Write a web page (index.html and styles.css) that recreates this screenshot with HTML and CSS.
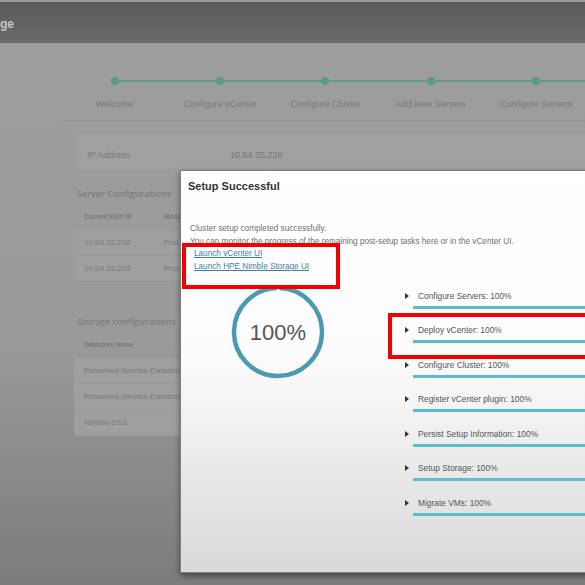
FILE: index.html
```html
<!DOCTYPE html>
<html lang="en">
<head>
    <meta charset="UTF-8">
    <meta name="viewport" content="width=device-width, initial-scale=1.0">
    <title>Setup Successful</title>
    <link rel="stylesheet" href="styles.css">
</head>
<body>
    <div class="topbar"><span class="brand">ge</span></div>

    <div class="page">
        <!-- wizard steps -->
        <div class="stepper">
            <div class="step"><span class="dot"></span><span class="step-label">Welcome</span></div>
            <div class="step"><span class="dot"></span><span class="step-label">Configure vCenter</span></div>
            <div class="step"><span class="dot"></span><span class="step-label">Configure Cluster</span></div>
            <div class="step"><span class="dot"></span><span class="step-label">Add New Servers</span></div>
            <div class="step"><span class="dot"></span><span class="step-label">Configure Servers</span></div>
            <div class="step"><span class="dot"></span></div>
        </div>
        <div class="divider"></div>

        <div class="summary">
            <div class="ip-row">
                <span class="col-a">IP Address</span>
                <span class="col-ip">10.64.35.228</span>
            </div>

            <div class="section-title">Server Configurations</div>
            <div class="grid">
                <div class="grid-head"><span class="col-b">Current ESXi IP</span><span>Model</span></div>
                <div class="grid-row"><span class="col-b">10.64.33.236</span><span>ProLiant</span></div>
                <div class="grid-row"><span class="col-b">10.64.33.233</span><span>ProLiant</span></div>
            </div>

            <div class="section-title storage">Storage configurations</div>
            <div class="grid">
                <div class="grid-head"><span class="col-b">Datastore Name</span></div>
                <div class="grid-row"><span>Reserved-Service-Datastore</span></div>
                <div class="grid-row"><span>Reserved-Service-Datastore</span></div>
                <div class="grid-row"><span>Nimble-DS1</span></div>
            </div>
        </div>
    </div>

    <!-- result dialog -->
    <div class="modal">
        <h3 class="modal-title">Setup Successful</h3>
        <p class="message">
            Cluster setup completed successfully.<br>
            You can monitor the progress of the remaining post-setup tasks here or in the vCenter UI.
        </p>
        <div class="links">
            <a href="#">Launch vCenter UI</a><br>
            <a href="#">Launch HPE Nimble Storage UI</a>
        </div>

        <div class="modal-body">
            <div class="gauge">
                <svg width="96" height="96" viewBox="0 0 96 96">
                    <circle cx="48" cy="48" r="44" fill="none" stroke="#4a9bb1" stroke-width="4.5"
                            stroke-dasharray="273.5 3" transform="rotate(-88 48 48)"/>
                    <text x="48" y="56" text-anchor="middle" class="gauge-text">100%</text>
                </svg>
            </div>

            <div class="tasks">
                <div class="task"><div class="task-label"><span class="caret"></span>Configure Servers: 100%</div><div class="bar"></div></div>
                <div class="task"><div class="task-label"><span class="caret"></span>Deploy vCenter: 100%</div><div class="bar"></div></div>
                <div class="task"><div class="task-label"><span class="caret"></span>Configure Cluster: 100%</div><div class="bar"></div></div>
                <div class="task"><div class="task-label"><span class="caret"></span>Register vCenter plugin: 100%</div><div class="bar"></div></div>
                <div class="task"><div class="task-label"><span class="caret"></span>Persist Setup Information: 100%</div><div class="bar"></div></div>
                <div class="task"><div class="task-label"><span class="caret"></span>Setup Storage: 100%</div><div class="bar"></div></div>
                <div class="task"><div class="task-label"><span class="caret"></span>Migrate VMs: 100%</div><div class="bar"></div></div>
            </div>
        </div>

        <div class="mark mark-links"></div>
        <div class="mark mark-task"></div>
    </div>
</body>
</html>
```

FILE: styles.css
```css
html, body {
    margin: 0;
    padding: 0;
}

body {
    width: 585px;
    height: 585px;
    overflow: hidden;
    position: relative;
    font-family: "Liberation Sans", Arial, sans-serif;
    background-color: #8a8a8a;
}

.topbar {
    height: 43px;
    background: linear-gradient(#5b5b5b, #6a6a6a);
    border-top: 2px solid #9a9a9a;
    box-sizing: border-box;
    display: flex;
    align-items: center;
}

.topbar .brand {
    color: #c4c4c4;
    font-size: 12px;
    font-weight: bold;
    margin-top: 2px;
}

.page {
    height: 542px;
    background: linear-gradient(#9d9d9d, #9a9a9a 55%, #7c7c7c);
    padding-left: 55px;
    box-sizing: border-box;
}

/* wizard steps */
.stepper {
    display: flex;
    align-items: flex-start;
    padding-top: 34px;
    margin-left: 7px;
}

.step {
    width: 105.4px;
    flex-shrink: 0;
    display: flex;
    flex-direction: column;
    align-items: center;
    position: relative;
    height: 33px;
}

.step::after {
    content: "";
    position: absolute;
    top: 3px;
    left: 50%;
    width: 100%;
    height: 2px;
    background-color: #5f9d89;
}

.dot {
    width: 8px;
    height: 8px;
    flex-shrink: 0;
    border-radius: 50%;
    background-color: #5a9984;
}

.step-label {
    margin-top: 14px;
    font-size: 9px;
    line-height: 11px;
    color: #7a7a7a;
    white-space: nowrap;
}

.divider {
    margin-top: 10px;
    margin-left: 8px;
    border-top: 1px solid #929292;
}

.summary {
    padding-left: 13px;
}

.ip-row {
    margin-top: 14px;
    margin-left: 8px;
    height: 34px;
    box-sizing: border-box;
    padding-top: 5px;
    display: flex;
    align-items: center;
    padding-left: 11px;
    background-color: #a0a0a0;
    font-size: 9px;
    color: #787878;
}

.col-a {
    width: 143px;
}

.section-title {
    margin-top: 15px;
    height: 20px;
    line-height: 20px;
    padding-left: 9px;
    font-family: "Open Sans", "Liberation Sans", sans-serif;
    font-size: 9px;
    font-weight: 600;
    color: #7d7d7d;
}

.section-title.storage {
    margin-top: 30px;
}

.grid {
    margin-left: 6px;
    width: 200px;
}

.grid-head,
.grid-row {
    height: 26px;
    display: flex;
    align-items: center;
    padding-left: 10px;
    color: #7a7a7a;
    white-space: nowrap;
    border-bottom: 1px solid #979797;
    box-sizing: border-box;
}

.grid-head {
    font-size: 6.5px;
    font-weight: bold;
}

.grid-row {
    font-size: 8px;
    background-color: #9f9f9f;
}

.col-b {
    width: 80px;
}

/* dialog */
.modal {
    position: absolute;
    left: 180px;
    top: 170px;
    width: 430px;
    height: 403px;
    box-sizing: border-box;
    background: linear-gradient(#ffffff, #fcfcfc 45%, #d9d9d9);
    border: 1px solid #7d7d7d;
    box-shadow: 0 3px 6px rgba(0, 0, 0, 0.45);
}

.modal-title {
    margin: 0;
    padding: 8px 0 0 7px;
    font-size: 11px;
    line-height: 14px;
    font-weight: bold;
    color: #333;
}

.message {
    margin: 30px 0 0;
    padding-left: 9px;
    font-size: 8.2px;
    line-height: 12.7px;
    color: #6e6e6e;
    white-space: nowrap;
}

.links {
    padding-left: 13px;
    font-size: 8.2px;
    line-height: 12.7px;
}

.links a {
    color: #3f7fa6;
}

.modal-body {
    display: flex;
    margin-top: 10px;
}

.gauge {
    width: 193px;
    display: flex;
    justify-content: center;
}

.gauge-text {
    font-family: "Liberation Sans", Arial, sans-serif;
    font-size: 22px;
    fill: #555;
}

.tasks {
    margin-left: 31px;
    padding-top: 6px;
    flex: 1;
}

.task {
    margin-bottom: 15.5px;
}

.task-label {
    height: 12px;
    display: flex;
    align-items: center;
    font-size: 8.4px;
    color: #555;
    white-space: nowrap;
}

.caret {
    width: 0;
    height: 0;
    border-left: 4px solid #333;
    border-top: 3px solid transparent;
    border-bottom: 3px solid transparent;
    margin-right: 9px;
}

.bar {
    margin-top: 4px;
    margin-left: 8px;
    height: 3px;
    background-color: #5bbbcf;
}

/* red annotation boxes */
.mark {
    position: absolute;
    border: 4px solid #f40000;
    box-sizing: border-box;
}

.mark-links {
    left: 1px;
    top: 72px;
    width: 158px;
    height: 46px;
}

.mark-task {
    left: 207px;
    top: 142px;
    width: 240px;
    height: 46px;
}
```
